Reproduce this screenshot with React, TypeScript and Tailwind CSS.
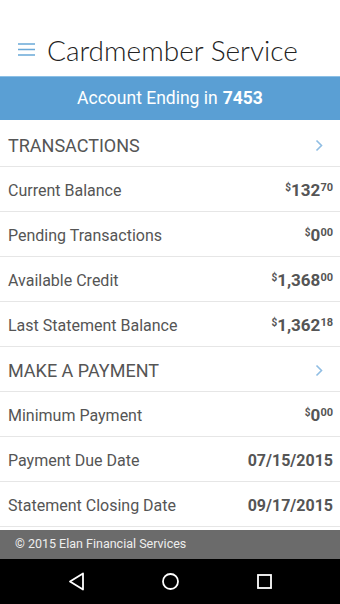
import React from 'react';

type Row = { label: string; dollars?: string; cents?: string; date?: string };

const transactions: Row[] = [
  { label: 'Current Balance', dollars: '132', cents: '70' },
  { label: 'Pending Transactions', dollars: '0', cents: '00' },
  { label: 'Available Credit', dollars: '1,368', cents: '00' },
  { label: 'Last Statement Balance', dollars: '1,362', cents: '18' },
];

const payment: Row[] = [
  { label: 'Minimum Payment', dollars: '0', cents: '00' },
  { label: 'Payment Due Date', date: '07/15/2015' },
  { label: 'Statement Closing Date', date: '09/17/2015' },
];

function Chevron() {
  return (
    <svg width="8" height="13" viewBox="0 0 8 13" className="mr-[17px]">
      <path d="M1.5 1.5 L6.5 6.5 L1.5 11.5" fill="none" stroke="#8fbde3" strokeWidth="1.6" />
    </svg>
  );
}

function Header({ title }: { title: string }) {
  return (
    <div className="flex h-[45px] items-center justify-between border-b border-[#e6e6e6] pl-2 pt-[2px]">
      <span className="text-[18px] text-[#555]">{title}</span>
      <Chevron />
    </div>
  );
}

function ValueRow({ row }: { row: Row }) {
  return (
    <div className="flex h-[45px] items-center justify-between border-b border-[#e6e6e6] pl-2 pr-[7px] pt-[3px]">
      <span className="text-[16px] text-[#555]">{row.label}</span>
      {row.date ? (
        <span className="text-[16px] font-bold text-[#555]">{row.date}</span>
      ) : (
        <span className="flex items-start font-bold text-[#555]">
          <span className="mt-[1px] text-[10px] leading-none">$</span>
          <span className="text-[17px] leading-none">{row.dollars}</span>
          <span className="text-[11px] leading-none">{row.cents}</span>
        </span>
      )}
    </div>
  );
}

export default function App() {
  return (
    <div className="flex h-[604px] w-[340px] flex-col bg-white font-['Roboto',sans-serif]">
      <div className="flex h-[76px] items-end pb-[12px] pl-[18px]">
        <svg width="17" height="13" viewBox="0 0 17 13" className="mb-[8px]">
          <path d="M0 1 H17 M0 6.5 H17 M0 12 H17" stroke="#6aa9d8" strokeWidth="1.4" />
        </svg>
        <span className="ml-[12px] font-['Lato',sans-serif] text-[28px] font-light leading-none text-[#222]">
          Cardmember Service
        </span>
      </div>
      <div className="flex h-[44px] items-center justify-center border-t border-[#8cc0e6] bg-[#5a9fd4] text-[17.5px] text-white">
        Account Ending in <span className="ml-[5px] font-bold">7453</span>
      </div>
      <div className="mt-[2px]">
        <Header title="TRANSACTIONS" />
        {transactions.map((r) => (
          <ValueRow key={r.label} row={r} />
        ))}
        <Header title="MAKE A PAYMENT" />
        {payment.map((r) => (
          <ValueRow key={r.label} row={r} />
        ))}
      </div>
      <div className="mt-[3px] flex h-[29px] items-center bg-[#6b6b6b] pl-[15px] text-[12.5px] text-[#eee]">
        © 2015 Elan Financial Services
      </div>
      <div className="flex flex-1 items-center justify-center gap-[75px] bg-black">
        <svg width="19" height="19" viewBox="0 0 19 19">
          <path d="M16 1.5 L3 9.5 L16 17.5 Z" fill="none" stroke="white" strokeWidth="1.8" strokeLinejoin="round" />
        </svg>
        <svg width="19" height="19" viewBox="0 0 19 19">
          <circle cx="9.5" cy="9.5" r="7.5" fill="none" stroke="white" strokeWidth="1.8" />
        </svg>
        <svg width="19" height="19" viewBox="0 0 19 19">
          <rect x="3" y="3" width="13" height="13" fill="none" stroke="white" strokeWidth="1.8" />
        </svg>
      </div>
    </div>
  );
}
